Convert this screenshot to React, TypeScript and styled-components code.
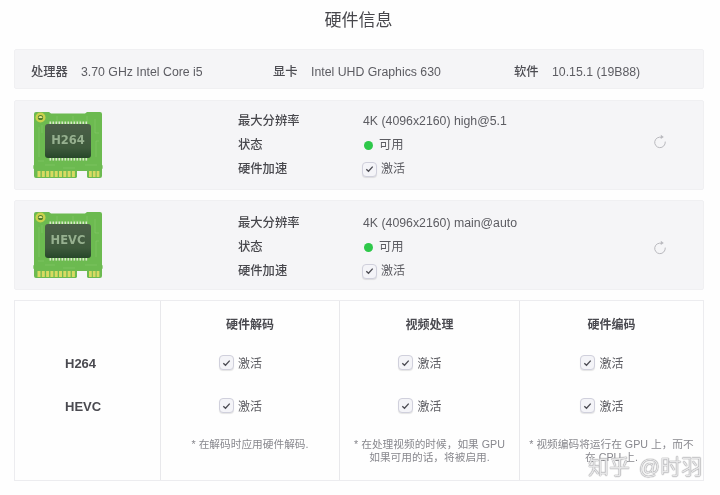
import React from "react";
import styled, { createGlobalStyle } from "styled-components";

const Global = createGlobalStyle`
  html, body { margin: 0; padding: 0; background: #fefefe; }
  body { font-family: "Liberation Sans", "Noto Sans CJK SC", sans-serif; color: #55555b; }
`;

const Page = styled.div`
  position: relative;
  width: 720px;
  height: 495px;
  overflow: hidden;
  padding: 0 16px 0 14px;
  box-sizing: border-box;
  filter: blur(0.35px);
`;

const Title = styled.h1`
  margin: 0;
  height: 49px;
  padding-top: 10px;
  box-sizing: border-box;
  font-size: 17px;
  line-height: 21px;
  font-weight: 400;
  color: #47474c;
  text-align: center;
  padding-right: 1px;
`;

const InfoBar = styled.section`
  display: grid;
  grid-template-columns: 50px 192px 38px 203px 38px 1fr;
  align-items: center;
  height: 40px;
  padding: 5px 0 0 16px;
  box-sizing: border-box;
  background: #f5f5f7;
  border: 1px solid #f0f0f2;
  border-radius: 2px;
  font-size: 12.3px;
  line-height: 16px;
  margin-bottom: 11px;
`;

const InfoLabel = styled.span`
  font-weight: 500;
  color: #4c4c52;
`;

const InfoValue = styled.span`
  color: #5c5c62;
`;

const CodecCard = styled.section`
  display: grid;
  grid-template-columns: 205px 125px 1fr 51px;
  align-items: center;
  height: 90px;
  padding-left: 18px;
  box-sizing: border-box;
  background: #f5f5f7;
  border: 1px solid #f0f0f2;
  border-radius: 2px;
  margin-bottom: 10px;
  font-size: 12.3px;
  line-height: 16px;
`;

const ChipSlot = styled.div`
  display: flex;
  align-items: center;
  height: 100%;
`;

const Rows = styled.div<{ $head?: boolean; $shift: number }>`
  display: grid;
  grid-template-rows: repeat(3, 24px);
  align-items: center;
  font-weight: ${(p) => (p.$head ? 500 : 400)};
  color: ${(p) => (p.$head ? "#47474c" : "#5c5c62")};
  margin-top: ${(p) => p.$shift}px;
`;

const Status = styled.div`
  display: flex;
  align-items: center;
  gap: 6px;
  padding-left: 1px;
`;

const Dot = styled.i`
  width: 9px;
  height: 9px;
  border-radius: 50%;
  background: #2ec84a;
`;

const Refresh = styled.div<{ $shift: number }>`
  color: #b9b9be;
  display: flex;
  margin-left: 1px;
  margin-top: ${(p) => p.$shift}px;
`;

const Check = styled.label`
  display: inline-flex;
  align-items: center;
  gap: 4px;
  font-size: 12px;
  color: #5c5c62;
  margin-left: -1px;
`;

const Box = styled.span`
  display: flex;
  align-items: center;
  justify-content: center;
  width: 15px;
  height: 15px;
  box-sizing: border-box;
  border: 1.5px solid #d0d0dc;
  border-radius: 4px;
  background: #f4f4f8;
  box-shadow: 0 1px 1px rgba(0, 0, 0, 0.1);
`;

const Table = styled.section`
  display: grid;
  grid-template-columns: 145px 179px 180px 1fr;
  height: 181px;
  border: 1px solid #ececef;
  background: #fefefe;
  box-sizing: border-box;
`;

const NameColumn = styled.div`
  display: grid;
  grid-template-rows: 43px 43px;
  padding: 41px 0 0 50px;
  align-items: center;
  font-size: 13px;
  font-weight: 700;
  color: #4a4a50;
  align-content: start;
`;

const Column = styled.div`
  display: flex;
  flex-direction: column;
  align-items: center;
  border-left: 1px solid #e8e8eb;
  padding-top: 14px;
`;

const ColumnHead = styled.div`
  height: 20px;
  line-height: 20px;
  font-size: 12px;
  font-weight: 700;
  color: #4a4a50;
  margin-bottom: 6px;
`;

const CheckCell = styled.div`
  height: 43px;
  display: flex;
  align-items: center;
  justify-content: center;
  padding-right: 18px;
`;

const Note = styled.p`
  margin: 11px 0 0;
  font-size: 10.7px;
  line-height: 13px;
  color: #88888e;
  text-align: center;
  white-space: pre-line;
`;

const Watermark = styled.div`
  position: absolute;
  left: 588px;
  top: 454px;
  font-size: 21px;
  line-height: 26px;
  white-space: nowrap;
  word-spacing: 3px;
  color: rgba(255, 255, 255, 0.8);
  text-shadow: 0 0 1px #808085, 0 0 1px #808085;
`;

function Chip({ label }: { label: string }) {
  const id = `die-${label}`;
  const pads = [0, 1, 2, 3, 4, 5, 6, 7, 8];
  const pins = Array.from({ length: 13 }, (_, i) => i);
  return (
    <svg width="71" height="68" viewBox="0 0 71 68">
      <defs>
        <linearGradient id={id} x1="0" y1="0" x2="0" y2="1">
          <stop offset="0" stopColor="#4c5f49" />
          <stop offset="0.7" stopColor="#3e5a3c" />
          <stop offset="1" stopColor="#27472a" />
        </linearGradient>
      </defs>
      <path
        d="M3 1H16l2 1.5H52l2-1.5H67a2 2 0 0 1 2 2V54l.6.6v2.8l-.6.6V65a2 2 0 0 1-2 2H55l-1-1V60H44V66l-1 1H3a2 2 0 0 1-2-2V58l-.6-.6v-2.8l.6-.6V3a2 2 0 0 1 2-2z"
        fill="#6cba50"
      />
      <path
        d="M6 16v30M9 14v8M62 8v14h4M66 30h-3v16M24 5v6h6M40 5v5h8M54 5v6M12 54h10M30 57h12M52 54h12M5 50h6"
        stroke="#8ccd70"
        strokeWidth="0.7"
        fill="none"
        opacity="0.7"
      />
      <circle cx="7.5" cy="6.5" r="5" fill="#c9d24c" />
      <circle cx="7.5" cy="6.5" r="2.6" fill="#4f7d2c" />
      <path d="M5.5 7a2 2 0 0 1 4 0z" fill="#e6ea8c" />
      {pins.map((i) => (
        <React.Fragment key={i}>
          <rect x={16.5 + i * 3} y={10.5} width="1.6" height="2.6" fill="#d8e8c8" />
          <rect x={16.5 + i * 3} y={47} width="1.6" height="2.6" fill="#d8e8c8" />
        </React.Fragment>
      ))}
      <rect x="12" y="13" width="46" height="34" rx="3" fill={`url(#${id})`} />
      <text
        x="35"
        y="33"
        textAnchor="middle"
        fontFamily="'DejaVu Sans', sans-serif"
        fontWeight="700"
        fontSize="11.5"
        fill="#96b08f"
      >
        {label}
      </text>
      {pads.map((i) => (
        <rect key={i} x={4.5 + i * 4.3} y={60} width="3" height="6" fill="#d8da62" />
      ))}
      {[0, 1, 2].map((i) => (
        <rect key={i} x={56 + i * 3.8} y={60} width="2.8" height="6" fill="#d8da62" />
      ))}
    </svg>
  );
}

function RefreshIcon() {
  return (
    <svg width="14" height="15" viewBox="0 0 14 15" fill="none">
      <path d="M8.6 3.3A5.3 5.3 0 1 0 12.3 8" stroke="currentColor" strokeWidth="1" strokeLinecap="round" />
      <path d="M7.8 0.8l3 2.3-3 2z" fill="currentColor" />
    </svg>
  );
}

function Activate() {
  return (
    <Check>
      <Box>
        <svg width="9" height="8" viewBox="0 0 9 8" fill="none">
          <path d="M1.3 4.2L3.5 6.3 7.7 1.6" stroke="#4b4b52" strokeWidth="1.3" />
        </svg>
      </Box>
      激活
    </Check>
  );
}

function Codec({
  label,
  res,
  rowShift,
  iconShift,
}: {
  label: string;
  res: string;
  rowShift: number;
  iconShift: number;
}) {
  return (
    <CodecCard>
      <ChipSlot>
        <Chip label={label} />
      </ChipSlot>
      <Rows $head $shift={rowShift}>
        <span>最大分辨率</span>
        <span>状态</span>
        <span>硬件加速</span>
      </Rows>
      <Rows $shift={rowShift}>
        <span>{res}</span>
        <Status>
          <Dot />
          可用
        </Status>
        <div>
          <Activate />
        </div>
      </Rows>
      <Refresh $shift={iconShift}>
        <RefreshIcon />
      </Refresh>
    </CodecCard>
  );
}

const columns = [
  { head: "硬件解码", note: "* 在解码时应用硬件解码." },
  { head: "视频处理", note: "* 在处理视频的时候，如果 GPU\n如果可用的话，将被启用." },
  { head: "硬件编码", note: "* 视频编码将运行在 GPU 上，而不\n在 CPU 上." },
];

export default function App() {
  return (
    <Page>
      <Global />
      <Title>硬件信息</Title>
      <InfoBar>
        <InfoLabel>处理器</InfoLabel>
        <InfoValue>3.70 GHz Intel Core i5</InfoValue>
        <InfoLabel>显卡</InfoLabel>
        <InfoValue>Intel UHD Graphics 630</InfoValue>
        <InfoLabel>软件</InfoLabel>
        <InfoValue>10.15.1 (19B88)</InfoValue>
      </InfoBar>
      <Codec label="H264" res="4K (4096x2160) high@5.1" rowShift={0} iconShift={-7} />
      <Codec label="HEVC" res="4K (4096x2160) main@auto" rowShift={4} iconShift={5} />
      <Table>
        <NameColumn>
          <span>H264</span>
          <span>HEVC</span>
        </NameColumn>
        {columns.map((c) => (
          <Column key={c.head}>
            <ColumnHead>{c.head}</ColumnHead>
            <CheckCell>
              <Activate />
            </CheckCell>
            <CheckCell>
              <Activate />
            </CheckCell>
            <Note>{c.note}</Note>
          </Column>
        ))}
      </Table>
      <Watermark>知乎 @时羽</Watermark>
    </Page>
  );
}
